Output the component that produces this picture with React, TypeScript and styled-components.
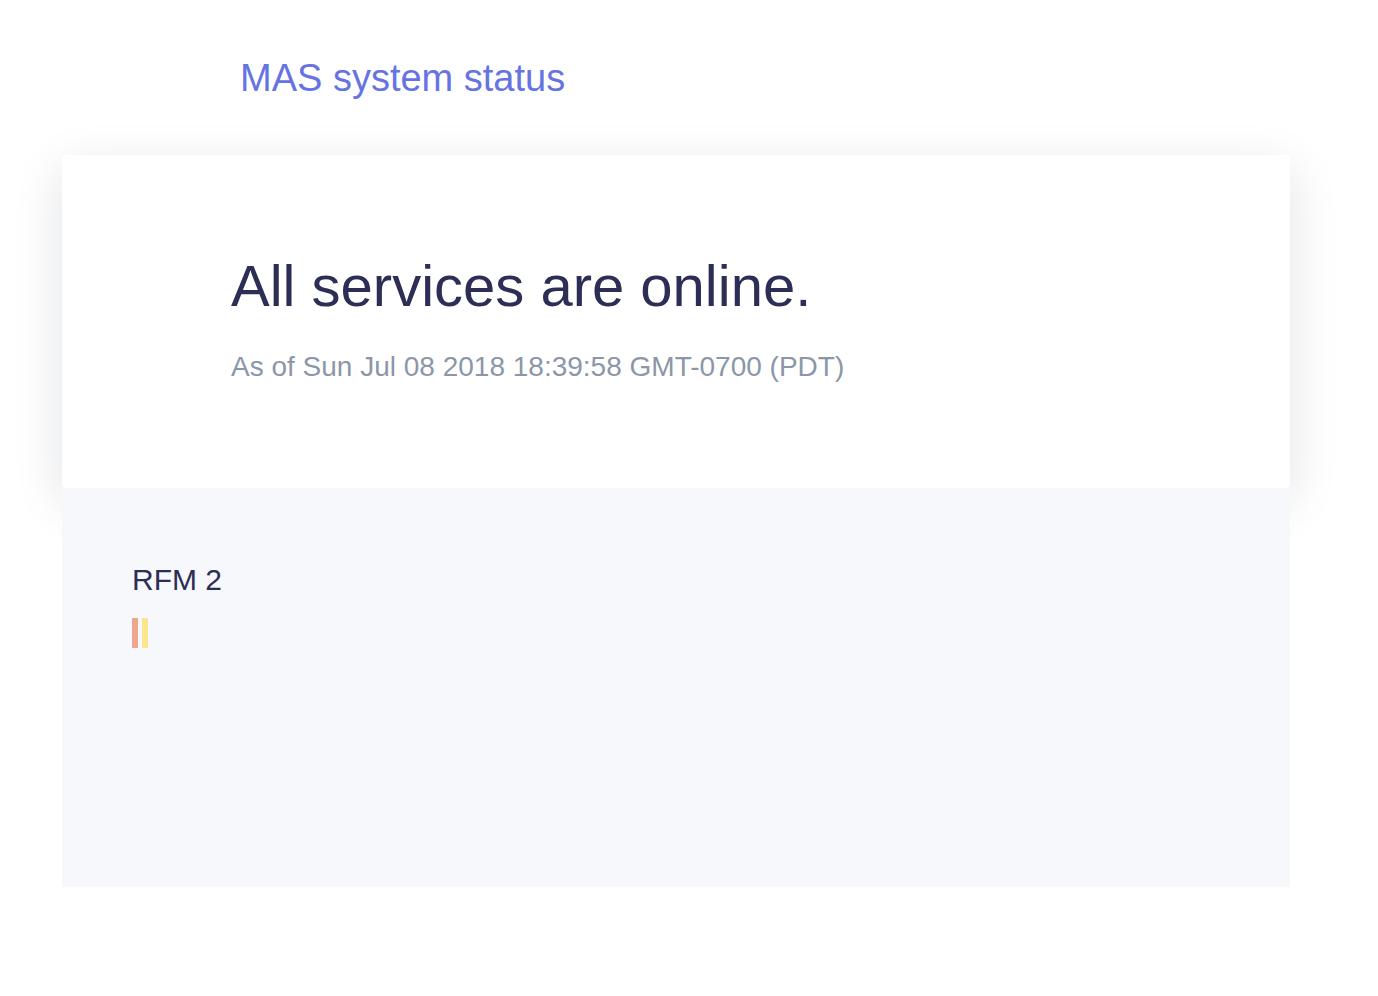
import styled, { createGlobalStyle } from "styled-components";

const GlobalStyle = createGlobalStyle`
  html, body {
    margin: 0;
    padding: 0;
    background: #ffffff;
    font-family: "Liberation Sans", Arial, Helvetica, sans-serif;
  }
`;

const uptime = [
  { color: "#efa68f" },
  { color: "#f9e68f" },
];

function App() {
  return (
    <>
      <GlobalStyle />
      <Page>
        <Header>
          <Title>MAS system status</Title>
        </Header>
        <Main>
          <StatusCard>
            <Headline>All services are online.</Headline>
            <Timestamp>As of Sun Jul 08 2018 18:39:58 GMT-0700 (PDT)</Timestamp>
          </StatusCard>
          <Services>
            <Service>
              <ServiceName>RFM 2</ServiceName>
              <Bars>
                {uptime.map((b, i) => (
                  <Bar key={i} $color={b.color} />
                ))}
              </Bars>
            </Service>
          </Services>
        </Main>
      </Page>
    </>
  );
}

export default App;

const Page = styled.div`
  width: 1378px;
  min-height: 996px;
  box-sizing: border-box;
  padding-top: 59px;
`;

const Header = styled.header`
  padding-left: 240px;
  height: 96px;
`;

const Title = styled.h1`
  margin: 0;
  font-size: 38px;
  line-height: 1;
  font-weight: 400;
  color: #6573e3;
`;

const Main = styled.main`
  margin-left: 62px;
  width: 1228px;
`;

const StatusCard = styled.section`
  position: relative;
  z-index: 1;
  height: 333px;
  box-sizing: border-box;
  padding: 102px 0 0 169px;
  background: #ffffff;
  border-radius: 4px;
  box-shadow: 0 14px 50px rgba(20, 25, 50, 0.12);
`;

const Headline = styled.h2`
  margin: 0;
  font-size: 58px;
  line-height: 1;
  font-weight: 400;
  color: #2d2e55;
`;

const Timestamp = styled.p`
  margin: 38px 0 0;
  font-size: 28px;
  line-height: 1;
  color: #8b97a8;
`;

const Services = styled.section`
  position: relative;
  z-index: 2;
  height: 399px;
  box-sizing: border-box;
  padding: 77px 70px 0;
  background: #f7f8fc;
`;

const Service = styled.div`
  display: flex;
  flex-direction: column;
  gap: 23px;
`;

const ServiceName = styled.h3`
  margin: 0;
  font-size: 30px;
  line-height: 1;
  font-weight: 400;
  color: #2d2e55;
`;

const Bars = styled.div`
  display: flex;
  gap: 4px;
`;

const Bar = styled.span<{ $color: string }>`
  display: block;
  width: 6px;
  height: 30px;
  background: ${({ $color }) => $color};
`;
